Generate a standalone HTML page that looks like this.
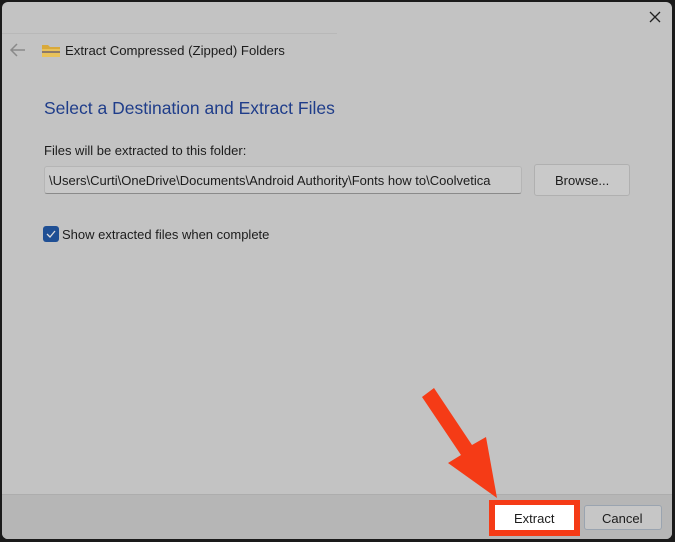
<!DOCTYPE html>
<html><head><style>
body{margin:0;width:675px;height:542px;background:#1a1a1a;position:relative;overflow:hidden;font-family:"Liberation Sans",sans-serif;}
.win{position:absolute;left:2px;top:2px;width:670px;height:537px;background:#c3c3c3;border-radius:6px;overflow:hidden;}
.t{position:absolute;white-space:nowrap;color:#1c1c1c;}
</style></head><body>
<div class="win">
<div style="position:absolute;left:0;top:31px;width:335px;height:1px;background:#b8b8b8"></div>
<svg style="position:absolute;left:647px;top:9px" width="12" height="12"><path d="M1 1L11 11M11 1L1 11" stroke="#222" stroke-width="1.3"/></svg>
<svg style="position:absolute;left:7px;top:41px" width="18" height="14"><path d="M16 7H2M8 1L2 7l6 6" stroke="#8a8a8a" stroke-width="1.5" fill="none"/></svg>
<svg style="position:absolute;left:40px;top:41px" width="18" height="14"><path d="M0 2h6l2 2h10v10H0z" fill="#d9a93a"/><rect x="0" y="6" width="18" height="8" fill="#e8c25a"/><rect x="0" y="8" width="18" height="2" fill="#8c7a6a"/></svg>
<div class="t" style="left:63px;top:41px;font-size:13.2px">Extract Compressed (Zipped) Folders</div>
<div class="t" style="left:42px;top:96px;font-size:17.5px;color:#1f3d8a">Select a Destination and Extract Files</div>
<div class="t" style="left:42px;top:141px;font-size:13px">Files will be extracted to this folder:</div>
<div style="position:absolute;left:42px;top:164px;width:478px;height:28px;background:#c9c9c9;border:1px solid #b5b5b5;border-bottom-color:#8a8a8a;box-sizing:border-box;border-radius:3px;overflow:hidden">
<div class="t" style="left:4px;top:6px;font-size:13px">\Users\Curti\OneDrive\Documents\Android Authority\Fonts how to\Coolvetica</div></div>
<div style="position:absolute;left:532px;top:162px;width:96px;height:32px;background:#c9c9c9;border:1px solid #b0b0b0;box-sizing:border-box;border-radius:3px"><div class="t" style="left:20px;top:8px;font-size:13px">Browse...</div></div>
<div style="position:absolute;left:41px;top:224px;width:16px;height:16px;background:#1f4f94;border-radius:3px"><svg width="16" height="16"><path d="M4 8l3 3 5-6" stroke="#ddd" stroke-width="1.3" fill="none"/></svg></div>
<div class="t" style="left:60px;top:225px;font-size:13px">Show extracted files when complete</div>
<div style="position:absolute;left:0;top:492px;width:670px;height:45px;background:#b6b6b6;border-top:1px solid #adadad"></div>
<div style="position:absolute;left:487px;top:498px;width:91px;height:36px;background:#f53b16"></div>
<div style="position:absolute;left:493px;top:503px;width:79px;height:25px;background:#fff"></div>
<div class="t" style="left:512px;top:509px;font-size:13px">Extract</div>
<div style="position:absolute;left:582px;top:503px;width:78px;height:25px;background:#c6c6c6;border:1px solid #9aa4b0;box-sizing:border-box;border-radius:3px"></div>
<div class="t" style="left:600px;top:509px;font-size:13px">Cancel</div>
</div>
<svg style="position:absolute;left:0;top:0" width="675" height="542"><path d="M422 397L434 388 472 445 486 437 497 498 448 463 461 455Z" fill="#f53b16"/></svg>
</body></html>
